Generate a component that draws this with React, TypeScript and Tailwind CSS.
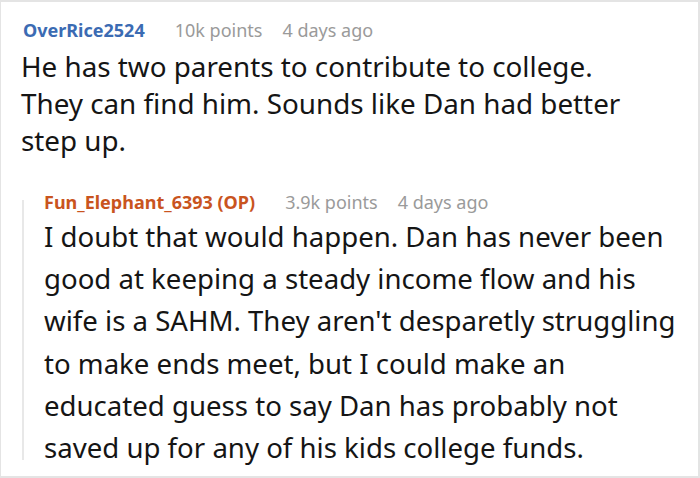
import React from "react";

const font = { fontFamily: '"Noto Sans", "Open Sans", sans-serif' };

const parentLines = [
  "He has two parents to contribute to college.",
  "They can find him. Sounds like Dan had better",
  "step up.",
];

const replyLines = [
  "I doubt that would happen. Dan has never been",
  "good at keeping a steady income flow and his",
  "wife is a SAHM. They aren't desparetly struggling",
  "to make ends meet, but I could make an",
  "educated guess to say Dan has probably not",
  "saved up for any of his kids college funds.",
];

export default function App() {
  return (
    <div
      className="w-[700px] h-[478px] bg-white border-2 border-l border-[#e4e4e4] overflow-hidden text-[#151515]"
      style={font}
    >
      {/* Parent comment */}
      <div className="pl-[20px] pt-[15px]">
        <div className="flex items-baseline text-[18px] leading-[26px] pl-[2px]">
          <span className="font-bold text-[#3b6bb3]">OverRice2524</span>
          <span className="ml-[30px] text-[#9a9a9a]">10k points</span>
          <span className="ml-[20px] text-[#9a9a9a]">4 days ago</span>
        </div>
        <div className="text-[27.8px] leading-[37px] mt-[5px]">
          {parentLines.map((l) => (
            <div key={l} className="whitespace-nowrap">{l}</div>
          ))}
        </div>
      </div>

      {/* Reply */}
      <div className="flex ml-[21px] mt-[30px]">
        <div className="w-[2px] bg-[#e8e8e8] mt-[11px] mb-[8px] shrink-0" />
        <div className="pl-[20px]">
          <div className="flex items-baseline text-[18px] leading-[26px]">
            <span className="font-bold text-[#c9541e]">Fun_Elephant_6393 (OP)</span>
            <span className="ml-[30px] text-[#9a9a9a]">3.9k points</span>
            <span className="ml-[20px] text-[#9a9a9a]">4 days ago</span>
          </div>
          <div className="text-[27.6px] leading-[42.2px]">
            {replyLines.map((l) => (
              <div key={l} className="whitespace-nowrap">{l}</div>
            ))}
          </div>
        </div>
      </div>
    </div>
  );
}
